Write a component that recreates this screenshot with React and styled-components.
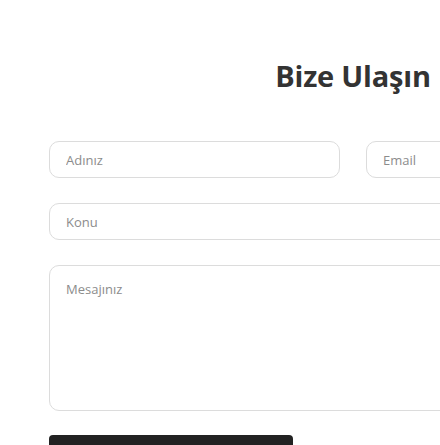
import styled, { createGlobalStyle } from "styled-components";

const Global = createGlobalStyle`
  body {
    margin: 0;
    background: #fff;
    font-family: "Open Sans", "Noto Sans", sans-serif;
  }
`;

const Section = styled.section`
  width: 608px;
  margin-left: 49px;
  padding-top: 58px;
`;

const Title = styled.h2`
  margin: 0 0 47px;
  text-align: center;
  font-size: 29px;
  line-height: 36px;
  font-weight: 700;
  color: #333;
  letter-spacing: -0.2px;
`;

const Form = styled.form`
  display: flex;
  flex-direction: column;
  gap: 25px;
`;

const Row = styled.div`
  display: grid;
  grid-template-columns: 1fr 1fr;
  gap: 26px;
`;

const Field = styled.input`
  box-sizing: border-box;
  width: 100%;
  height: 37px;
  padding: 0 16px;
  border: 1px solid #dcdcdc;
  border-radius: 10px;
  font-family: inherit;
  font-size: 13px;
  color: #333;
  outline: none;
  &::placeholder {
    color: #8c8c8c;
  }
`;

const Area = styled.textarea`
  box-sizing: border-box;
  width: 100%;
  height: 146px;
  padding: 14px 16px;
  border: 1px solid #dcdcdc;
  border-radius: 10px;
  font-family: inherit;
  font-size: 13px;
  resize: none;
  outline: none;
  &::placeholder {
    color: #8c8c8c;
  }
`;

const Button = styled.button`
  width: 244px;
  height: 46px;
  margin-top: -1px;
  border: none;
  border-radius: 4px;
  background: #222;
  color: #fff;
  font-family: inherit;
  font-size: 14px;
  display: flex;
  align-items: center;
  justify-content: flex-end;
  padding-right: 30px;
`;

const Badge = styled.span`
  width: 12px;
  height: 12px;
  border-radius: 3px;
  background: #1d3a5c;
  margin-top: 4px;
`;

export default function App() {
  return (
    <>
      <Global />
      <Section>
        <Title>Bize Ulaşın</Title>
        <Form onSubmit={(e) => e.preventDefault()}>
          <Row>
            <Field placeholder="Adınız" />
            <Field placeholder="Email" />
          </Row>
          <Field placeholder="Konu" />
          <Area placeholder="Mesajınız" />
          <Button type="submit">
            <Badge />
          </Button>
        </Form>
      </Section>
    </>
  );
}
